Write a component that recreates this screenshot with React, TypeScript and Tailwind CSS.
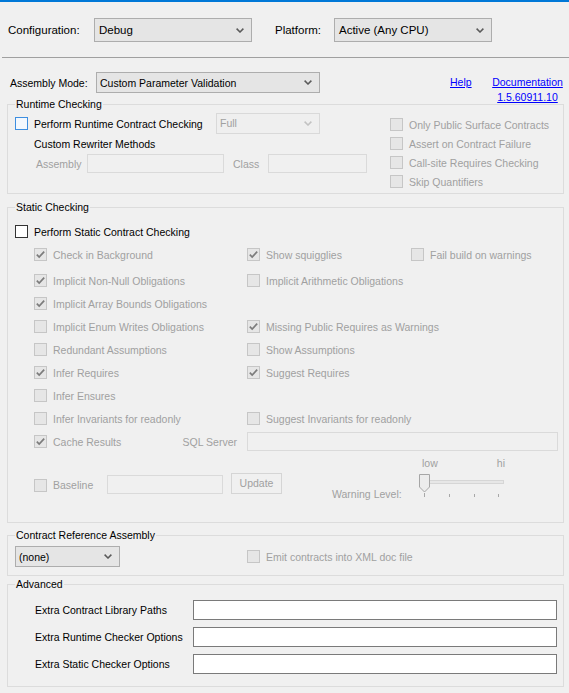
import React from "react";

type CbState = "hover" | "enabled" | "disabled";

function Chevron({ disabled }: { disabled?: boolean }) {
  return (
    <svg width="8" height="5" viewBox="0 0 8 5" className="shrink-0">
      <path
        d="M0.6 0.6 L4 4 L7.4 0.6"
        fill="none"
        stroke={disabled ? "#c2c2c2" : "#5a5a5a"}
        strokeWidth="1.5"
      />
    </svg>
  );
}

function CheckBox({ state, checked }: { state: CbState; checked?: boolean }) {
  const cls =
    state === "hover"
      ? "border-[#3d8ee0] bg-[#f3f8fe]"
      : state === "enabled"
      ? "border-[#333333] bg-white"
      : "border-[#c6c6c6] bg-[#e6e6e6]";
  return (
    <div className={`w-[13px] h-[13px] shrink-0 border flex items-center justify-center ${cls}`}>
      {checked && (
        <svg width="11" height="11" viewBox="0 0 11 11">
          <path d="M1.8 5.6 L4.2 8 L9.2 2.6" fill="none" stroke="#7c7c7c" strokeWidth="1.7" />
        </svg>
      )}
    </div>
  );
}

function Check({
  label,
  checked,
  state = "disabled",
}: {
  label: string;
  checked?: boolean;
  state?: CbState;
}) {
  return (
    <div className="flex items-center">
      <CheckBox state={state} checked={checked} />
      <span className={`ml-[6px] pt-px whitespace-nowrap ${state === "disabled" ? "text-[#a0a0a0]" : "text-black"}`}>
        {label}
      </span>
    </div>
  );
}

function GroupBox({
  label,
  className,
  children,
}: {
  label: string;
  className: string;
  children?: React.ReactNode;
}) {
  return (
    <div className={`relative ml-[7px] w-[557px] border border-[#dcdcdc] ${className}`}>
      <span className="absolute left-[7px] top-[-7px] px-[1px] bg-[#f0f0f0] leading-[13px] text-black whitespace-nowrap">
        {label}
      </span>
      {children}
    </div>
  );
}

export default function App() {
  return (
    <div className="w-[569px] h-[693px] overflow-hidden bg-[#f0f0f0] border-t-2 border-[#0078d7] text-[10.5px] leading-[13px] text-black font-['Liberation_Sans',Arial,sans-serif]">
      {/* Configuration / Platform */}
      <div className="mt-[16px] flex h-[24px] items-center pl-[8px] text-[11.5px]">
        <span className="w-[86px] whitespace-nowrap pt-px">Configuration:</span>
        <div className="flex h-[24px] w-[158px] items-center justify-between border border-[#adadad] bg-[#e5e5e5] pl-[4px] pr-[7px]">
          <span className="pt-px">Debug</span>
          <Chevron />
        </div>
        <span className="ml-[23px] w-[59px] whitespace-nowrap pt-px">Platform:</span>
        <div className="flex h-[24px] w-[158px] items-center justify-between border border-[#adadad] bg-[#e5e5e5] pl-[4px] pr-[7px]">
          <span className="pt-px">Active (Any CPU)</span>
          <Chevron />
        </div>
      </div>

      <div className="mt-[15px] ml-[2px] h-px bg-[#a0a0a0]" />

      {/* Assembly mode */}
      <div className="mt-[14px] flex h-[21px] items-center pl-[10px]">
        <span className="w-[86px] whitespace-nowrap pt-px">Assembly Mode:</span>
        <div className="flex h-[21px] w-[224px] items-center justify-between border border-[#adadad] bg-[#e5e5e5] pl-[3px] pr-[7px]">
          <span className="pt-px">Custom Parameter Validation</span>
          <Chevron />
        </div>
        <span className="ml-[130px] mt-[3px] w-[41px] self-start leading-[15px] text-[#0000ff] underline">Help</span>
        <div className="mt-[3px] flex w-[73px] flex-col items-center self-start leading-[15px] text-[#0000ff] underline">
          <span>Documentation</span>
          <span>1.5.60911.10</span>
        </div>
      </div>

      {/* Runtime Checking */}
      <GroupBox label="Runtime Checking" className="mt-[11px] h-[90px]">
        <div className="flex">
          <div className="w-[382px] pl-[7px] pt-[8px]">
            <div className="flex h-[21px] items-center">
              <CheckBox state="hover" />
              <span className="ml-[6px] w-[182px] whitespace-nowrap pt-px">Perform Runtime Contract Checking</span>
              <div className="flex h-[21px] w-[104px] items-center justify-between border border-[#d9d9d9] bg-[#efefef] pl-[3px] pr-[7px] text-[#a0a0a0]">
                <span>Full</span>
                <Chevron disabled />
              </div>
            </div>
            <div className="flex h-[19px] items-center pl-[19px] pt-px">Custom Rewriter Methods</div>
            <div className="mt-[1px] flex h-[19px] items-center pl-[21px] text-[#a0a0a0]">
              <span className="w-[51px] pt-px">Assembly</span>
              <div className="h-[19px] w-[137px] border border-[#dadada] bg-[#f0f0f0]" />
              <span className="ml-[9px] w-[35px] pt-px">Class</span>
              <div className="h-[19px] w-[99px] border border-[#dadada] bg-[#f0f0f0]" />
            </div>
          </div>
          <div className="flex flex-col pt-[10px]">
            <div className="flex h-[19px] items-center"><Check label="Only Public Surface Contracts" /></div>
            <div className="flex h-[19px] items-center"><Check label="Assert on Contract Failure" /></div>
            <div className="flex h-[19px] items-center"><Check label="Call-site Requires Checking" /></div>
            <div className="flex h-[19px] items-center"><Check label="Skip Quantifiers" /></div>
          </div>
        </div>
      </GroupBox>

      {/* Static Checking */}
      <GroupBox label="Static Checking" className="mt-[13px] h-[316px]">
        <div className="pt-[12px]">
          <div className="flex h-[23px] items-center pl-[7px]">
            <Check label="Perform Static Contract Checking" state="enabled" />
          </div>
          <div className="pl-[26px]">
            <div className="flex h-[23px] items-center">
              <div className="w-[213px]"><Check label="Check in Background" checked /></div>
              <div className="w-[164px]"><Check label="Show squigglies" checked /></div>
              <Check label="Fail build on warnings" />
            </div>
            <div className="mt-[3px] flex h-[23px] items-center">
              <div className="w-[213px]"><Check label="Implicit Non-Null Obligations" checked /></div>
              <Check label="Implicit Arithmetic Obligations" />
            </div>
            <div className="flex h-[23px] items-center">
              <div className="w-[213px]"><Check label="Implicit Array Bounds Obligations" checked /></div>
            </div>
            <div className="flex h-[23px] items-center">
              <div className="w-[213px]"><Check label="Implicit Enum Writes Obligations" /></div>
              <Check label="Missing Public Requires as Warnings" checked />
            </div>
            <div className="flex h-[23px] items-center">
              <div className="w-[213px]"><Check label="Redundant Assumptions" /></div>
              <Check label="Show Assumptions" />
            </div>
            <div className="flex h-[23px] items-center">
              <div className="w-[213px]"><Check label="Infer Requires" checked /></div>
              <Check label="Suggest Requires" checked />
            </div>
            <div className="flex h-[23px] items-center">
              <div className="w-[213px]"><Check label="Infer Ensures" /></div>
            </div>
            <div className="flex h-[23px] items-center">
              <div className="w-[213px]"><Check label="Infer Invariants for readonly" /></div>
              <Check label="Suggest Invariants for readonly" />
            </div>
            <div className="flex h-[23px] items-center">
              <div className="flex w-[213px] items-center">
                <Check label="Cache Results" checked />
                <span className="ml-auto mr-[10px] pt-[2px] text-[#a0a0a0]">SQL Server</span>
              </div>
              <div className="h-[19px] w-[311px] border border-[#dadada] bg-[#f0f0f0]" />
            </div>
            <div className="flex items-start">
              <div className="mt-[20px] flex h-[21px] items-center">
                <div className="w-[73px] pt-[3px]"><Check label="Baseline" /></div>
                <div className="mt-px h-[19px] w-[116px] border border-[#dadada] bg-[#f0f0f0]" />
                <div className="ml-[8px] flex h-[21px] w-[51px] items-center justify-center border border-[#d5d5d5] bg-[#f0f0f0] text-[#a0a0a0]">
                  Update
                </div>
              </div>
              <span className="ml-[50px] mt-[35px] w-[87px] whitespace-nowrap text-[#a0a0a0]">Warning Level:</span>
              <div className="mt-[4px] flex w-[90px] flex-col">
                <div className="flex justify-between pl-[3px] pr-[4px] text-[#a0a0a0]">
                  <span>low</span>
                  <span>hi</span>
                </div>
                <svg width="90" height="30" viewBox="0 0 90 30">
                  <rect x="5.5" y="10.5" width="79" height="3" fill="#e7e7e7" stroke="#d6d6d6" />
                  <path d="M0.5 4.5 H10.5 V17 L5.5 22 L0.5 17 Z" fill="#ececec" stroke="#a6a6a6" />
                  <line x1="5.5" y1="23" x2="5.5" y2="27" stroke="#a8a8a8" />
                  <line x1="30.5" y1="24" x2="30.5" y2="27" stroke="#a8a8a8" />
                  <line x1="55.5" y1="24" x2="55.5" y2="27" stroke="#a8a8a8" />
                  <line x1="79.5" y1="24" x2="79.5" y2="27" stroke="#a8a8a8" />
                </svg>
              </div>
            </div>
          </div>
        </div>
      </GroupBox>

      {/* Contract Reference Assembly */}
      <GroupBox label="Contract Reference Assembly" className="mt-[12px] h-[41px]">
        <div className="flex items-center pl-[7px] pt-[10px]">
          <div className="flex h-[21px] w-[105px] items-center justify-between border border-[#adadad] bg-[#e5e5e5] pl-[3px] pr-[7px]">
            <span className="pt-px">(none)</span>
            <Chevron />
          </div>
          <div className="ml-[127px]"><Check label="Emit contracts into XML doc file" /></div>
        </div>
      </GroupBox>

      {/* Advanced */}
      <GroupBox label="Advanced" className="mt-[8px] h-[103px]">
        <div className="flex flex-col gap-[7px] pl-[27px] pt-[15px]">
          <div className="flex h-[20px] items-center">
            <span className="w-[158px] whitespace-nowrap pt-px">Extra Contract Library Paths</span>
            <div className="h-[20px] w-[364px] border border-[#7a7a7a] bg-white" />
          </div>
          <div className="flex h-[20px] items-center">
            <span className="w-[158px] whitespace-nowrap pt-px">Extra Runtime Checker Options</span>
            <div className="h-[20px] w-[364px] border border-[#7a7a7a] bg-white" />
          </div>
          <div className="flex h-[20px] items-center">
            <span className="w-[158px] whitespace-nowrap pt-px">Extra Static Checker Options</span>
            <div className="h-[20px] w-[364px] border border-[#7a7a7a] bg-white" />
          </div>
        </div>
      </GroupBox>
    </div>
  );
}
